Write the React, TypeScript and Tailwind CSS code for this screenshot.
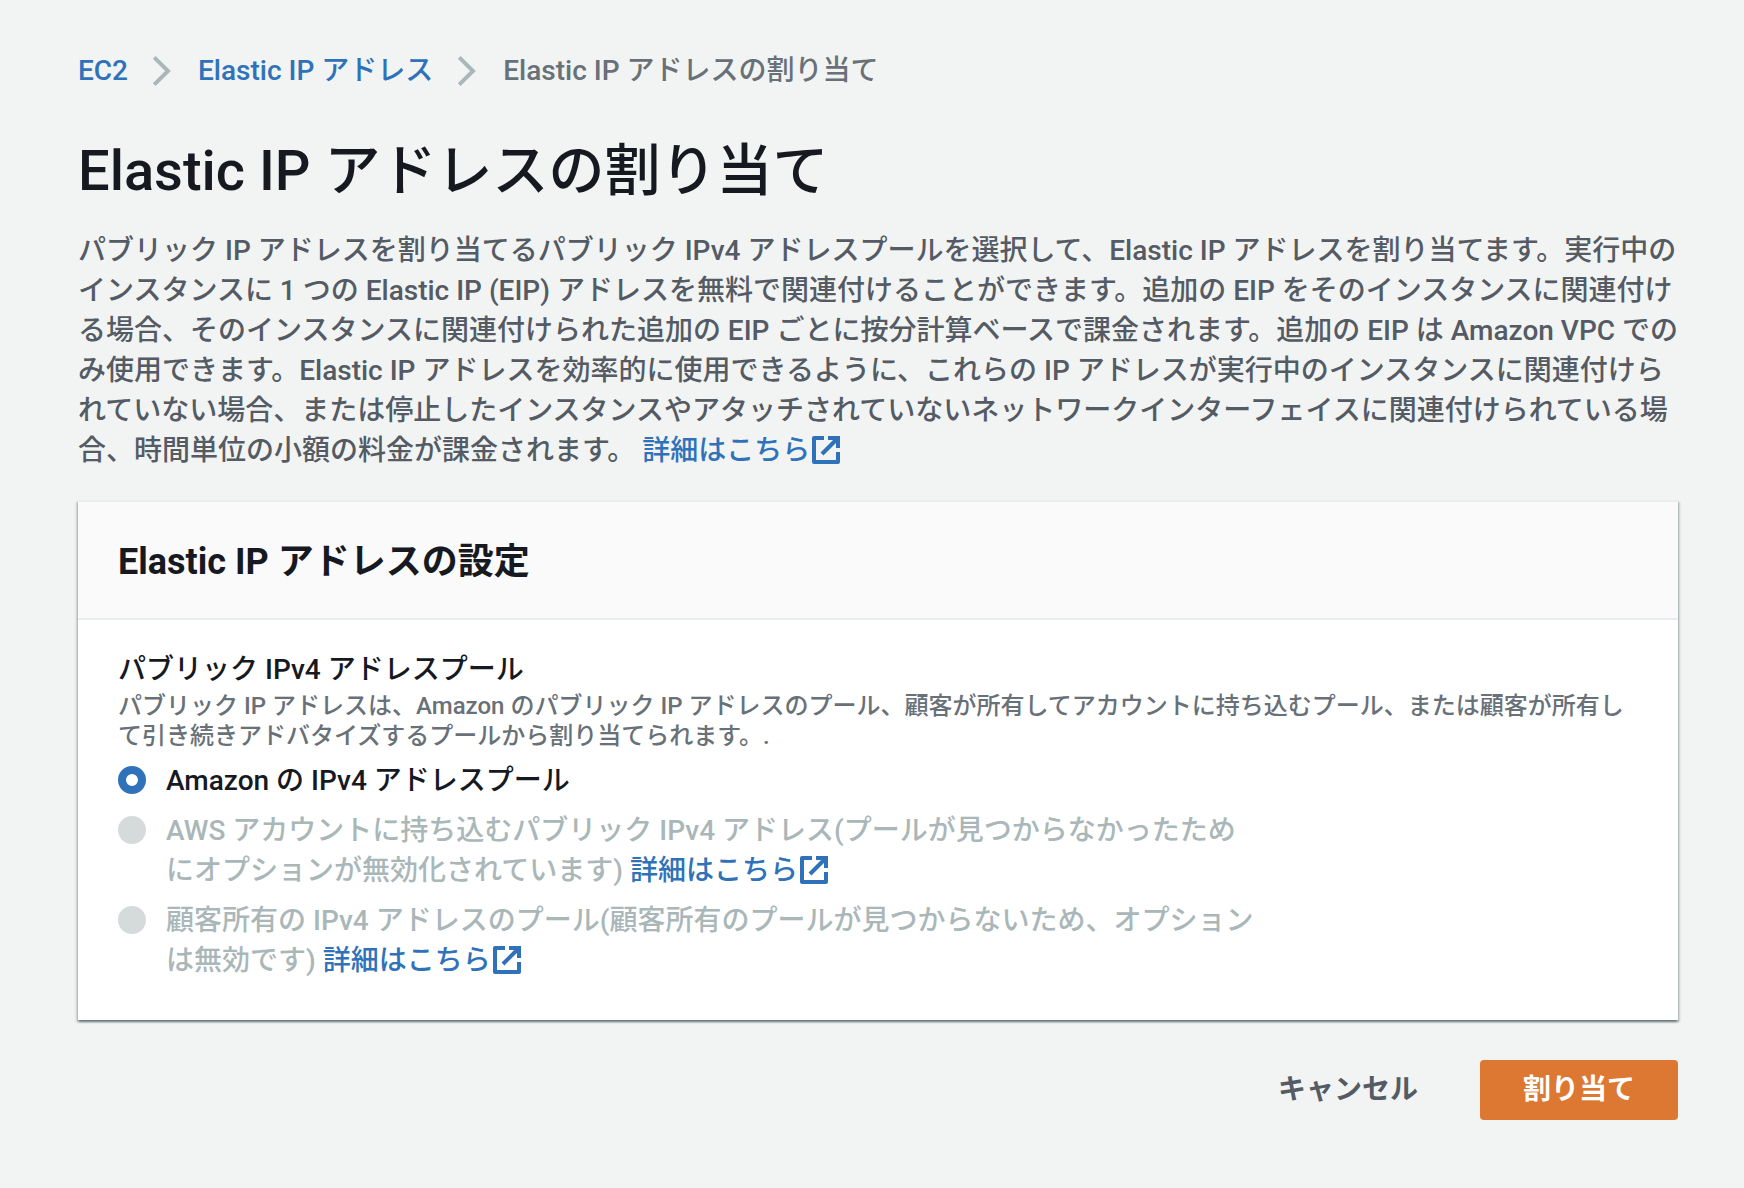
import React from 'react';

interface LinkProps {
  children: React.ReactNode;
}

interface PoolOption {
  id: string;
  label: string;
  disabled: boolean;
  learnMore: boolean;
}

const options: PoolOption[] = [
  { id: 'amazon', label: 'Amazon の IPv4 アドレスプール', disabled: false, learnMore: false },
  {
    id: 'byoip',
    label: 'AWS アカウントに持ち込むパブリック IPv4 アドレス(プールが見つからなかったためにオプションが無効化されています)',
    disabled: true,
    learnMore: true
  },
  {
    id: 'customer',
    label: '顧客所有の IPv4 アドレスのプール(顧客所有のプールが見つからないため、オプションは無効です)',
    disabled: true,
    learnMore: true
  }
];

const Chevron = () => (
  <svg className="w-5 h-8 ml-6 mr-[26px] text-[#aab7b8]" viewBox="0 0 20 32" fill="none" stroke="currentColor" strokeWidth="4" aria-hidden="true">
    <path d="M2.2 2.4L16 16L2.2 29.6" />
  </svg>
);

const ExternalLink: React.FC<LinkProps> = ({ children }) => (
  <a href="#" className="text-[#2f72b9] hover:underline">
    {children}
    <svg className="inline-block w-7 h-7 ml-0.5 align-[-4px]" viewBox="0 0 28 28" fill="none" stroke="currentColor" strokeWidth="4" aria-hidden="true">
      <path d="M12 2H2V26H26V16" strokeLinejoin="round" />
      <path d="M16 2H26V12" />
      <path d="M10 18L25 3" />
    </svg>
  </a>
);

const Breadcrumbs = () => (
  <nav aria-label="パンくずリスト">
    <ol className="flex items-center">
      <li><a href="#" className="text-[#2f72b9] hover:underline">EC2</a></li>
      <li aria-hidden="true"><Chevron /></li>
      <li><a href="#" className="text-[#2f72b9] hover:underline">Elastic IP アドレス</a></li>
      <li aria-hidden="true"><Chevron /></li>
      <li className="text-[#687078]">Elastic IP アドレスの割り当て</li>
    </ol>
  </nav>
);

const PoolSettings = () => (
  <section className="bg-white border-t-2 border-[#eaeded] shadow-[0_2px_2px_0_rgba(0,28,36,0.4),2px_2px_2px_0_rgba(0,28,36,0.15),-2px_2px_2px_0_rgba(0,28,36,0.15)]">
    <header className="bg-[#fafafa] border-b-2 border-[#eaeded] px-10 pt-[38px] pb-[34px]">
      <h2 className="text-[36px] leading-[44px] font-bold">Elastic IP アドレスの設定</h2>
    </header>
    <div className="px-10 pt-[30px] pb-[39px]">
      <fieldset>
        <legend>パブリック IPv4 アドレスプール</legend>
        <p className="pt-px text-2xl leading-[30px] text-[#687078]">
          パブリック IP アドレスは、Amazon のパブリック IP アドレスのプール、顧客が所有してアカウントに持ち込むプール、または顧客が所有して引き続きアドバタイズするプールから割り当てられます。.
        </p>
        <div className="flex flex-col gap-[10px] pt-[10px] max-w-[1140px]">
          {options.map(option => (
            <div key={option.id} className="flex items-start gap-5">
              <input
                type="radio"
                id={option.id}
                name="pool"
                defaultChecked={!option.disabled}
                disabled={option.disabled}
                className="appearance-none shrink-0 w-7 h-7 mt-[5px] rounded-full border-2 border-[#879596] bg-white checked:border-8 checked:border-[#2f72b9] disabled:border-[#d5dbdb] disabled:bg-[#d5dbdb]"
              />
              <div className={option.disabled ? 'text-[#aab7b8]' : ''}>
                <label htmlFor={option.id}>{option.label}</label>
                {option.learnMore && <> <ExternalLink>詳細はこちら</ExternalLink></>}
              </div>
            </div>
          ))}
        </div>
      </fieldset>
    </div>
  </section>
);

const App = () => {
  return (
    <main className="min-h-screen bg-[#f2f4f3] pl-[78px] pr-[66px] pt-[51px] pb-16 font-['Roboto','Noto_Sans_CJK_JP',sans-serif] font-medium text-[28px] leading-[40px] text-[#16191f]">
      <Breadcrumbs />
      <h1 className="mt-[45px] text-[56px] leading-[70px] font-medium">Elastic IP アドレスの割り当て</h1>
      <p className="mt-[25px] text-[#545b64]">
        パブリック IP アドレスを割り当てるパブリック IPv4 アドレスプールを選択して、Elastic IP アドレスを割り当てます。実行中のインスタンスに 1 つの Elastic IP (EIP) アドレスを無料で関連付けることができます。追加の EIP をそのインスタンスに関連付ける場合、そのインスタンスに関連付けられた追加の EIP ごとに按分計算ベースで課金されます。追加の EIP は Amazon VPC でのみ使用できます。Elastic IP アドレスを効率的に使用できるように、これらの IP アドレスが実行中のインスタンスに関連付けられていない場合、または停止したインスタンスやアタッチされていないネットワークインターフェイスに関連付けられている場合、時間単位の小額の料金が課金されます。 <ExternalLink>詳細はこちら</ExternalLink>
      </p>
      <div className="mt-[29px]">
        <PoolSettings />
      </div>
      <div className="mt-10 flex justify-end gap-5">
        <button type="button" className="h-[60px] px-[42px] font-bold text-[#545b64]">キャンセル</button>
        <button type="submit" className="h-[60px] px-[43px] rounded-sm bg-[#dd7832] font-bold text-white">割り当て</button>
      </div>
    </main>
  );
};

export default App;
